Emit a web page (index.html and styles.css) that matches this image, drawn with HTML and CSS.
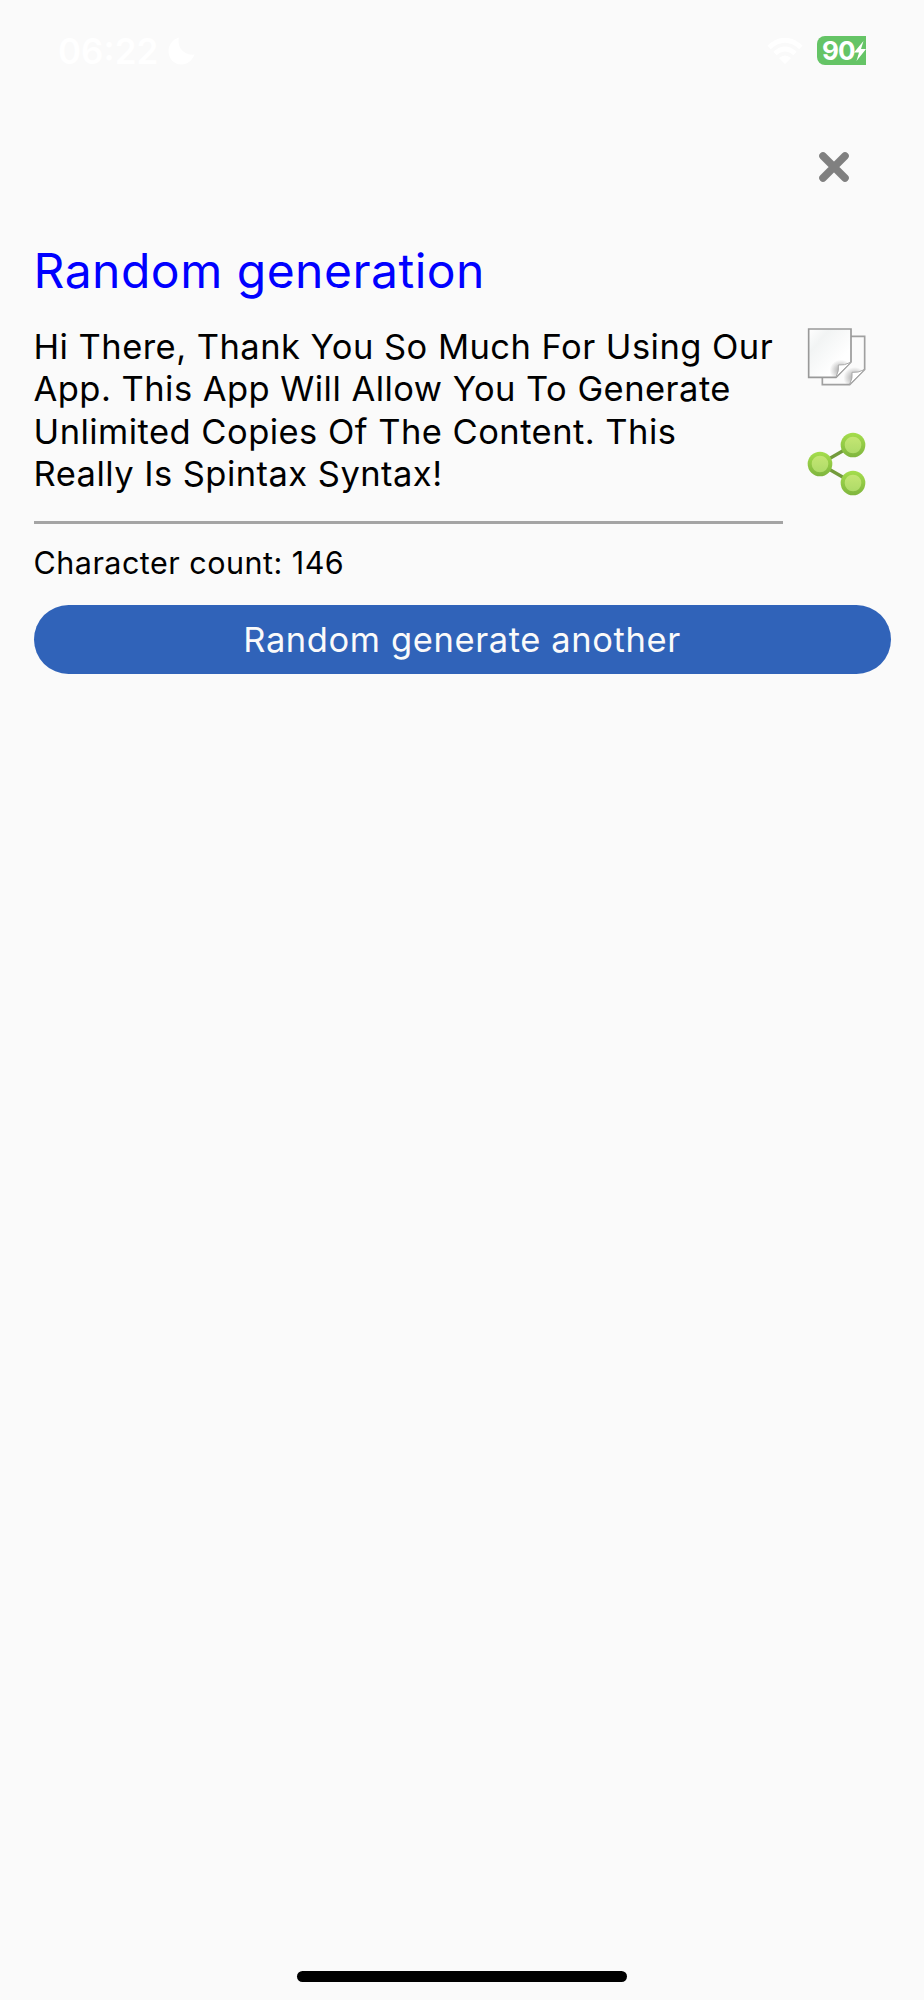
FILE: index.html
```html
<!DOCTYPE html>
<html lang="en">
<head>
    <meta charset="UTF-8">
    <meta name="viewport" content="width=device-width, initial-scale=1.0">
    <title>Random generation</title>
    <link rel="stylesheet" href="styles.css">
</head>
<body>
    <div class="status-bar">
        <span class="time">06:22</span>
        <svg class="moon" viewBox="0 0 27 28"><path d="M11 0.5C8.5 9 15 19 26.5 17.5C24 24 19 27.5 13.5 27.5C6 27.5 0.5 21.5 0.5 14.5C0.5 8 4.500 2.500 11 0.500Z" fill="#fff"/></svg>
        <svg class="wifi" viewBox="0 0 36 26">
            <path d="M2 9.500Q18 -5 34 9.500" fill="none" stroke="#fff" stroke-width="5"/>
            <path d="M8 15.500Q18 6.500 28 15.500" fill="none" stroke="#fff" stroke-width="5"/>
            <path d="M12 20Q18 15 24 20L18 26Z" fill="#fff"/>
        </svg>
        <div class="battery">
            <span>90</span>
            <svg class="bolt" viewBox="0 0 12 20"><path d="M9.500 0L0 11.500H5L2.500 20L12 8H7Z" fill="#fff"/></svg>
        </div>
    </div>

    <div class="top-row">
        <button type="button" class="close-btn" aria-label="Close">
            <svg width="32" height="32" viewBox="0 0 32 32"><path d="M5 5L27 27M27 5L5 27" stroke="#808080" stroke-width="7.600" stroke-linecap="round"/></svg>
        </button>
    </div>

    <div class="content">
        <h1>Random generation</h1>
        <div class="result">
            <p class="result-text">Hi There, Thank You So Much For Using Our<br>App. This App Will Allow You To Generate<br>Unlimited Copies Of The Content. This<br>Really Is Spintax Syntax!</p>
            <div class="actions">
                <button type="button" aria-label="Copy">
                    <svg width="60" height="60" viewBox="0 0 180 180">
                        <defs>
                            <linearGradient id="page" x1="0" y1="0" x2="1" y2="1">
                                <stop offset="0" stop-color="#fff"/>
                                <stop offset="0.250" stop-color="#f2f4f4"/>
                                <stop offset="0.700" stop-color="#fff"/>
                            </linearGradient>
                            <radialGradient id="shade">
                                <stop offset="0" stop-color="#888" stop-opacity="0.800"/>
                                <stop offset="1" stop-color="#888" stop-opacity="0"/>
                            </radialGradient>
                            <clipPath id="sheet"><path d="M5 3H132V102L83 148H5Z"/></clipPath>
                        </defs>
                        <g transform="translate(41 22)">
                            <path d="M5 3H132V102L87 148H5Z" fill="#fbfbfb" stroke="#a0a0a0" stroke-width="5"/>
                            <g clip-path="url(#sheet)"><ellipse cx="102" cy="127" rx="34" ry="32" fill="url(#shade)"/></g>
                            <path d="M87 147Q97 127 94 111Q112 113 131 103Z" fill="#fff" stroke="#aaa" stroke-width="3"/>
                        </g>
                        <path d="M5 3H132V102L87 148H5Z" fill="url(#page)" stroke="#999" stroke-width="5"/>
                        <g clip-path="url(#sheet)"><ellipse cx="102" cy="127" rx="34" ry="32" fill="url(#shade)"/></g>
                        <path d="M87 147Q97 127 94 111Q112 113 131 103Z" fill="#fff" stroke="#aaa" stroke-width="3"/>
                    </svg>
                </button>
                <button type="button" aria-label="Share">
                    <svg width="60" height="66" viewBox="0 0 180 198">
                        <defs>
                            <linearGradient id="ring" x1="0" y1="0" x2="0" y2="1">
                                <stop offset="0" stop-color="#a5de4c"/>
                                <stop offset="1" stop-color="#7fb53e"/>
                            </linearGradient>
                            <linearGradient id="dot" x1="0" y1="0" x2="0" y2="1">
                                <stop offset="0" stop-color="#c4e673"/>
                                <stop offset="1" stop-color="#aedb68"/>
                            </linearGradient>
                        </defs>
                        <path d="M138 39L39 96L138 153" fill="none" stroke="#739b3c" stroke-width="10"/>
                        <circle cx="138" cy="39" r="37" fill="url(#ring)"/>
                        <circle cx="39" cy="96" r="37" fill="url(#ring)"/>
                        <circle cx="138" cy="153" r="37" fill="url(#ring)"/>
                        <circle cx="138" cy="39" r="25" fill="url(#dot)"/>
                        <circle cx="39" cy="96" r="25" fill="url(#dot)"/>
                        <circle cx="138" cy="153" r="25" fill="url(#dot)"/>
                    </svg>
                </button>
            </div>
        </div>
        <p class="count">Character count: 146</p>
        <button type="button" class="generate-btn">Random generate another</button>
    </div>

    <div class="home-bar"></div>
</body>
</html>
```
FILE: styles.css
```css
* {
    box-sizing: border-box;
}
body {
    display: flex;
    flex-direction: column;
    margin: 0;
    height: 2000px;
    background-color: #fafafa;
    color: #000;
    font-family: Inter, "Liberation Sans", sans-serif;
}
h1, p {
    margin: 0;
}
button {
    padding: 0;
    border: none;
    background: none;
    font-family: inherit;
    cursor: pointer;
}
svg {
    display: block;
}
.status-bar {
    display: flex;
    align-items: center;
    height: 101px;
    padding: 0 58px;
    color: #fff;
}
.time {
    width: 110px;
    font-size: 35px;
    font-weight: 600;
}
.moon {
    width: 27px;
    height: 28px;
}
.wifi {
    width: 36px;
    height: 26px;
    margin-left: auto;
}
.battery {
    display: flex;
    align-items: center;
    width: 49px;
    height: 29px;
    margin-left: 14px;
    padding-left: 5px;
    border-radius: 8px 0 0 8px;
    background-color: #65c466;
    font-size: 26px;
    font-weight: 700;
    letter-spacing: -1px;
}
.bolt {
    flex-shrink: 0;
    width: 12px;
    height: 20px;
}
.top-row {
    display: flex;
    justify-content: flex-end;
    padding: 49.5px 74.5px 0.5px 0;
}
.content {
    padding: 59px 33.5px 0;
}
h1 {
    color: #0000ff;
    font-size: 48px;
    font-weight: 400;
    line-height: 58px;
    letter-spacing: 0.5px;
}
.result {
    display: flex;
    margin-top: 25px;
}
.result-text {
    width: 749px;
    height: 199px;
    padding-top: 1px;
    border-bottom: 3px solid #a4a4a4;
    font-size: 34.5px;
    line-height: 42.4px;
    letter-spacing: 0.46px;
    white-space: nowrap;
}
.actions {
    display: flex;
    flex-direction: column;
    gap: 44px;
    padding: 3px 0 0 24.5px;
}
.count {
    margin-top: 21px;
    font-size: 30.5px;
    line-height: 36px;
    letter-spacing: 0.48px;
}
.generate-btn {
    width: 100%;
    height: 69px;
    margin-top: 24px;
    border-radius: 35px;
    background-color: #3063b9;
    color: #fafafa;
    font-size: 34.5px;
    letter-spacing: 0.6px;
}
.home-bar {
    width: 330px;
    height: 11px;
    margin: auto auto 18px;
    border-radius: 6px;
    background-color: #000;
}
```
